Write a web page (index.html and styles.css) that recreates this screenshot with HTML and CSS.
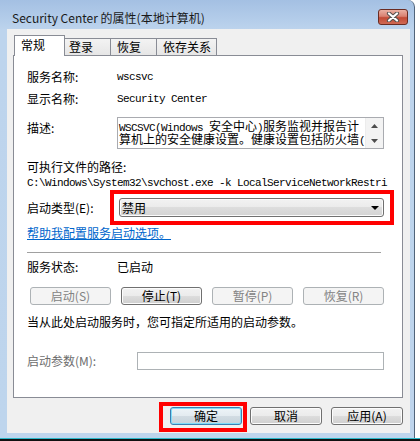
FILE: index.html
```html
<!DOCTYPE html>
<html lang="zh-CN">
<head>
<meta charset="utf-8">
<title>Security Center 的属性(本地计算机)</title>
<link rel="stylesheet" href="styles.css">
</head>
<body>
<div class="window">
  <div class="titlebar">
    <span class="title">Security Center 的属性(本地计算机)</span>
    <div class="close">
      <svg width="14" height="10" viewBox="0 0 14 10">
        <path d="M3 1.5 L11 8.5 M11 1.5 L3 8.5" stroke="#55514f" stroke-width="4.2" stroke-linecap="round"/>
        <path d="M3 1.5 L11 8.5 M11 1.5 L3 8.5" stroke="#ffffff" stroke-width="2.2" stroke-linecap="round"/>
      </svg>
    </div>
  </div>
  <div class="client">
    <div class="tabs">
      <div class="tab active">常规</div>
      <div class="tab">登录</div>
      <div class="tab">恢复</div>
      <div class="tab wide">依存关系</div>
    </div>
    <div class="panel">
      <div class="row r1"><span class="lbl">服务名称:</span><span class="mono">wscsvc</span></div>
      <div class="row r2"><span class="lbl">显示名称:</span><span class="mono">Security Center</span></div>
      <div class="row desc-row">
        <span class="lbl desc-lbl">描述:</span>
        <div class="desc">
          <div class="desc-text">
            <div class="dline"><span class="mono">WSCSVC(Windows </span>安全中心<span class="mono">)</span>服务监视并报告计</div>
            <div class="dline">算机上的安全健康设置。健康设置包括防火墙<span class="mono">(</span></div>
          </div>
          <div class="scroll">
            <div class="sbtn"><svg width="7" height="4" viewBox="0 0 7 4"><path d="M0 4 L3.5 0 L7 4 Z" fill="#4d4d4d"/></svg></div>
            <div class="sbtn"><svg width="7" height="4" viewBox="0 0 7 4"><path d="M0 0 L3.5 4 L7 0 Z" fill="#4d4d4d"/></svg></div>
          </div>
        </div>
      </div>
      <div class="row r-path-lbl">可执行文件的路径:</div>
      <div class="row r-path"><span class="mono">C:\Windows\System32\svchost.exe -k LocalServiceNetworkRestri</span></div>
      <div class="row r-type">
        <span class="lbl type-lbl">启动类型(E):</span>
        <div class="combo"><span class="combo-val">禁用</span><svg width="8" height="4" viewBox="0 0 8 4"><path d="M0 0 L8 0 L4 4 Z" fill="#000"/></svg></div>
      </div>
      <div class="row r-link"><a class="link" href="#">帮助我配置服务启动选项。</a></div>
      <div class="sep"></div>
      <div class="row r-status"><span class="lbl">服务状态:</span><span>已启动</span></div>
      <div class="row r-btns">
        <button class="btn disabled">启动(S)</button>
        <button class="btn">停止(T)</button>
        <button class="btn disabled">暂停(P)</button>
        <button class="btn disabled">恢复(R)</button>
      </div>
      <div class="row r-info">当从此处启动服务时，您可指定所适用的启动参数。</div>
      <div class="row r-param">
        <span class="lbl param-lbl">启动参数(M):</span>
        <div class="param-input"></div>
      </div>
    </div>
    <div class="footer">
      <button class="btn fbtn default">确定</button>
      <button class="btn fbtn">取消</button>
      <button class="btn fbtn last">应用(A)</button>
    </div>
  </div>
</div>
<div class="strip"></div>
<div class="mark mark-type"></div>
<div class="mark mark-ok"></div>
</body>
</html>
```

FILE: styles.css
```css
html, body {
  margin: 0;
  padding: 0;
}
body {
  width: 420px;
  height: 441px;
  background: #ffffff;
  position: relative;
  overflow: hidden;
  display: flex;
  flex-direction: column;
  align-items: flex-start;
  font-family: "Noto Sans CJK SC", "Noto Sans", sans-serif;
  font-size: 12px;
  color: #000;
}
.window {
  width: 414px;
  height: 438px;
  border-right: 1px solid #51647a;
  border-radius: 0 7px 0 0;
  background: linear-gradient(#a4c0e3 0, #b4cdea 20px, #bdd4ed 30px, #bed5ed 100%);
  display: flex;
  flex-direction: column;
  flex-shrink: 0;
}
.titlebar {
  height: 29px;
  display: flex;
  align-items: flex-start;
  justify-content: space-between;
  padding: 0 6px 0 12px;
  box-sizing: border-box;
}
.title {
  margin-top: 10px;
  line-height: 16px;
  font-size: 12px;
  color: #1a1a1a;
  white-space: nowrap;
}
.close {
  margin-top: 9px;
  width: 30px;
  height: 16px;
  box-sizing: border-box;
  border: 1px solid #6a2c22;
  border-radius: 3px;
  background: linear-gradient(#eab0a3 0, #d98171 45%, #c24a35 55%, #cf6a55 100%);
  display: flex;
  align-items: center;
  justify-content: center;
}
.close svg { display: block; }
.client {
  flex: 1;
  margin: 0 4px 5px 7px;
  background: #f0f0f0;
  display: flex;
  flex-direction: column;
}
.tabs {
  height: 26px;
  display: flex;
  align-items: flex-end;
  padding-left: 7px;
  position: relative;
  z-index: 1;
}
.tab {
  box-sizing: border-box;
  height: 17px;
  width: 47px;
  margin-left: -1px;
  padding-left: 4px;
  border: 1px solid #898c95;
  border-bottom: none;
  background: linear-gradient(#f3f3f3, #e6e6e6);
  line-height: 16px;
}
.tab.active {
  height: 21px;
  width: 51px;
  margin-left: 0;
  margin-bottom: -1px;
  padding-left: 6px;
  padding-top: 1px;
  background: #ffffff;
  z-index: 2;
}
.tab.wide { width: 61px; padding-left: 6px; }
.tabs .tab:nth-child(3) { padding-left: 6px; }
.panel {
  margin: 0 7px 0 6px;
  height: 343px;
  box-sizing: border-box;
  border: 1px solid #898c95;
  background: #ffffff;
  padding: 13px 0 0 13px;
  display: flex;
  flex-direction: column;
}
.row {
  display: flex;
  align-items: center;
  height: 16px;
  line-height: 16px;
  white-space: nowrap;
}
.lbl { width: 90px; flex-shrink: 0; }
.mono {
  font-family: "Liberation Mono", monospace;
  font-size: 11px;
  letter-spacing: -0.6px;
}
.r2 { margin-top: 6px; }
.desc-row {
  margin-top: 10px;
  height: 32px;
  align-items: flex-start;
}
.desc-lbl { margin-top: 3px; }
.desc {
  width: 267px;
  height: 32px;
  box-sizing: border-box;
  border: 1px solid #a9abb0;
  display: flex;
}
.desc-text {
  flex: 1;
  padding: 1px 0 0 1px;
  font-size: 12px;
  white-space: nowrap;
  display: flex;
  flex-direction: column;
}
.dline {
  height: 13px;
  line-height: 13px;
}
.scroll {
  width: 17px;
  background: #f3f3f3;
  border-left: 1px solid #ececec;
  display: flex;
  flex-direction: column;
}
.sbtn {
  flex: 1;
  display: flex;
  align-items: center;
  justify-content: center;
}
.sbtn svg { display: block; }
.r-path-lbl { margin-top: 10px; }
.r-type { margin-top: 7px; height: 19px; }
.type-lbl { width: 92px; }
.combo {
  width: 265px;
  height: 19px;
  box-sizing: border-box;
  border: 1px solid #707070;
  border-radius: 3px;
  background: linear-gradient(#f2f2f2 0, #ebebeb 50%, #dddddd 50%, #d3d3d3 100%);
  box-shadow: inset 0 0 0 1px #fbfbfb;
  display: flex;
  align-items: center;
  justify-content: space-between;
  padding: 0 4px 0 2px;
}
.combo svg { display: block; }
.r-link { margin-top: 8px; }
.link {
  color: #0066cc;
  text-decoration: underline;
}
.sep {
  margin-top: 11px;
  width: 354px;
  height: 1px;
  background: #a0a0a0;
}
.r-status { margin-top: 6px; }
.r-btns {
  margin-top: 12px;
  height: 18px;
  padding-left: 3px;
  gap: 10px;
}
.btn {
  box-sizing: border-box;
  width: 81px;
  height: 18px;
  padding: 0;
  margin: 0;
  border: 1px solid #707070;
  border-radius: 3px;
  background: linear-gradient(#f2f2f2 0, #ebebeb 50%, #dddddd 50%, #cfcfcf 100%);
  box-shadow: inset 0 0 0 1px #fcfcfc;
  font-family: "Noto Sans CJK SC", "Noto Sans", sans-serif;
  font-size: 12px;
  line-height: 16px;
  color: #000;
}
.btn.disabled {
  border-color: #adb2b5;
  background: #f4f4f4;
  box-shadow: none;
  color: #838383;
}
.r-info { margin-top: 9px; }
.r-param { margin-top: 22px; height: 18px; }
.param-lbl { width: 110px; color: #6d6d6d; }
.param-input {
  width: 247px;
  height: 18px;
  box-sizing: border-box;
  border: 1px solid #adb2b5;
  background: #ffffff;
}
.footer {
  margin-top: 9px;
  display: flex;
  justify-content: flex-end;
  padding-right: 7px;
}
.fbtn { width: 72px; margin-left: 8px; }
.fbtn.last { margin-left: 9px; }
.btn.default {
  border-color: #3c7fb1;
  background: linear-gradient(#eef4f8 0, #e3ebf0 50%, #d2dce3 50%, #c7d3db 100%);
  box-shadow: inset 0 0 0 1px #7fdcf9;
}
.strip {
  width: 420px;
  height: 3px;
  box-sizing: border-box;
  border-top: 1px solid #2bb7c9;
  background: #111111;
  flex-shrink: 0;
}
.mark {
  position: absolute;
  box-sizing: border-box;
  border: 4px solid #ff0000;
}
.mark-type { left: 110px; top: 190px; width: 284px; height: 35px; }
.mark-ok { left: 159px; top: 402px; width: 88px; height: 30px; }
```
